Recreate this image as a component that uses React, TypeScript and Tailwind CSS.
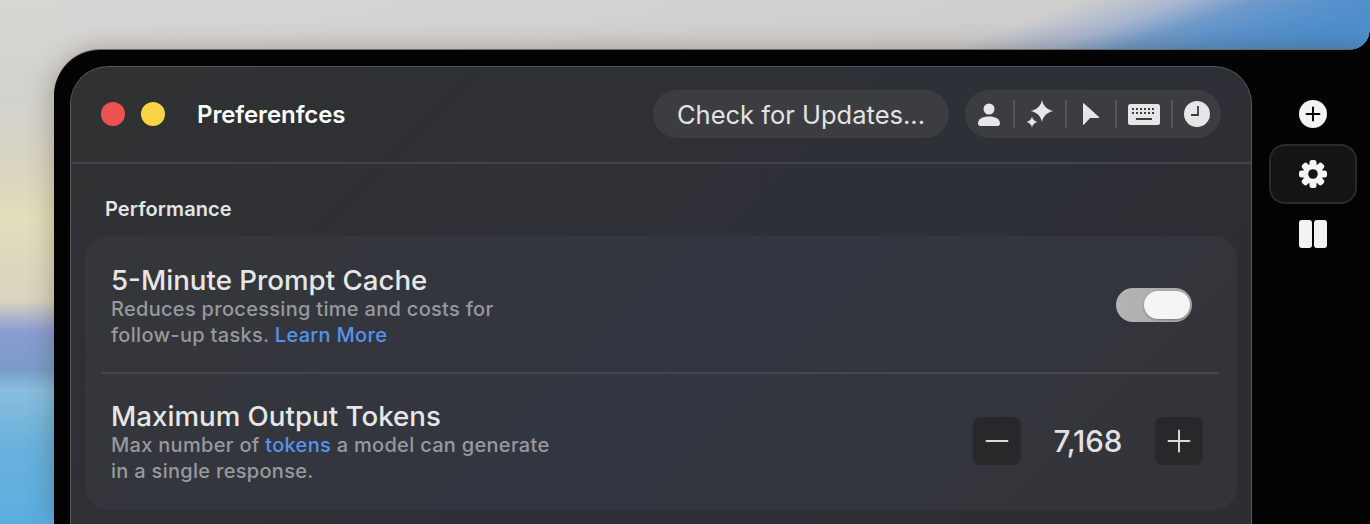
import React from 'react';
import { Minus, Plus } from 'lucide-react';

const font = { fontFamily: 'Inter, "Noto Sans", sans-serif' };
const gearTeeth = [0, 45, 90, 135, 180, 225, 270, 315];

const Divider = () => <div className="w-[2px] h-7 bg-[#55565b] shrink-0" />;

const GearIcon = () => (
  <svg width="28" height="28" viewBox="0 0 28 28" fill="#f4f4f4">
    {gearTeeth.map((deg) => (
      <rect key={deg} x="10.5" y="0" width="7" height="8" rx="2.5" transform={`rotate(${deg} 14 14)`} />
    ))}
    <circle cx="14" cy="14" r="10" />
    <circle cx="14" cy="14" r="4.8" fill="#141414" />
  </svg>
);

const Toolbar = () => (
  <div className="flex items-center h-12 w-[256px] rounded-full bg-[#3c3d41]">
    <div className="w-[48px] pr-px flex justify-center">
      <svg width="22" height="23" viewBox="0 0 22 23" fill="#e6e6e6">
        <circle cx="11" cy="6" r="5.500" />
        <path d="M0 20.500c0-4.500 4.500-7 11-7s11 2.500 11 7c0 1.500-1 2.500-2.500 2.500h-17C1 23 0 22 0 20.500z" />
      </svg>
    </div>
    <Divider />
    <div className="w-[50px] pr-px flex justify-center">
      <svg width="28" height="28" viewBox="0 0 28 28" fill="#e6e6e6">
        <path d="M16 0c1.200 6 5 9.800 11.500 11-6.500 1.200-10.300 5-11.500 11-1.200-6-5-9.800-11.500-11 6.500-1.200 10.300-5 11.500-11z" />
        <path d="M6 16.500c.6 2.800 2.500 4.900 5.500 5.500-3 .6-4.900 2.700-5.500 5.500-.6-2.800-2.500-4.900-5.500-5.500 3-.6 4.900-2.700 5.500-5.500z" />
      </svg>
    </div>
    <Divider />
    <div className="w-[48px] flex justify-center">
      <svg width="18" height="24" viewBox="0 0 18 24" fill="#e6e6e6">
        <path d="M1.500 1.500 17 15.500H8L1.500 22.500z" stroke="#e6e6e6" strokeLinejoin="round" />
      </svg>
    </div>
    <Divider />
    <div className="w-[54px] flex justify-center">
      <svg width="32" height="21" viewBox="0 0 32 21">
        <rect width="32" height="21" rx="2.500" fill="#e6e6e6" />
        <g fill="#3c3d41">
          <rect x="4" y="4" width="2" height="2" />
          <rect x="8" y="4" width="2" height="2" />
          <rect x="12" y="4" width="2" height="2" />
          <rect x="16" y="4" width="2" height="2" />
          <rect x="20" y="4" width="2" height="2" />
          <rect x="24" y="4" width="2" height="2" />
          <rect x="4" y="8" width="2" height="2" />
          <rect x="8" y="8" width="2" height="2" />
          <rect x="12" y="8" width="2" height="2" />
          <rect x="16" y="8" width="2" height="2" />
          <rect x="20" y="8" width="2" height="2" />
          <rect x="24" y="8" width="2" height="2" />
          <rect x="8" y="14" width="16" height="2" />
        </g>
      </svg>
    </div>
    <Divider />
    <div className="w-[48px] pr-px flex justify-center">
      <svg width="26" height="26" viewBox="0 0 26 26">
        <circle cx="13" cy="13" r="13" fill="#e6e6e6" />
        <path d="M14 5v9H7" fill="none" stroke="#3c3d41" strokeWidth="1.800" />
      </svg>
    </div>
  </div>
);

const Stepper = ({ children }: { children: React.ReactNode }) => (
  <button className="w-12 h-12 rounded-lg bg-[#27282a] flex items-center justify-center text-[#dcdcdc]">{children}</button>
);

export default function App() {
  return (
    <div
      style={font}
      className="relative w-[1370px] h-[524px] overflow-hidden pt-[50px] pl-[54px] flex [background:linear-gradient(180deg,#d8d7d4_0px,#d2d1cd_100px,#d9d5c0_170px,#e3debb_220px,#d8d4c0_300px,#8a9cd4_332px,#7a9cc8_370px,#88bede_390px,#68b0dc_450px,#5aaee0_524px)_0_0/54px_100%_no-repeat,linear-gradient(160deg,#d8d7d4_0px,#cfcecd_370px,#a9b6cf_405px,#6f9aca_430px,#5a92cc_455px,#4f8fcc_480px)]"
    >
      <div className="absolute top-[30px] right-0 w-5 h-5 bg-[radial-gradient(circle_at_0_0,transparent_19.5px,#000_20px)]" />
      <div className="flex-1 flex bg-[#030303] rounded-tl-[46px] pt-4 pl-4 shadow-[0_-1px_0_#6a6a68,0_0_26px_rgba(60,50,20,0.35)]">
        <main className="w-[1182px] h-[600px] shrink-0 rounded-t-[38px] border border-[#55585c] border-b-0 bg-[linear-gradient(135deg,#2f3132,#2d3037_55%,#2c2d30)]">
          <header className="h-[97px] pb-px px-[30px] border-b-2 border-[#424447] flex items-center">
            <div className="w-6 h-6 rounded-full bg-[#ee5350]" />
            <div className="w-6 h-6 rounded-full bg-[#f8d444] ml-4" />
            <h1 className="ml-8 mt-[2px] text-[24px] tracking-[-0.1px] font-semibold text-white">Preferenfces</h1>
            <div className="ml-auto flex items-center gap-4">
              <button className="h-12 w-[296px] pt-[2px] rounded-full bg-[#3c3d41] text-[25.500px] text-[#e3e3e3]">Check for Updates...</button>
              <Toolbar />
            </div>
          </header>
          <section className="px-[14px]">
            <h2 className="mt-[31px] ml-5 text-[20px] tracking-[0.1px] leading-7 font-semibold text-[#e4e4e4]">Performance</h2>
            <div className="mt-[13px] w-[1152px] rounded-3xl bg-[linear-gradient(135deg,#343638,#323641_50%,#333437)] pl-[17px] pr-[18px]">
              <div className="h-[138px] flex items-center justify-between border-b-2 border-[#45474b] pl-[9px] pr-[27px]">
                <div className="pt-[4px]">
                  <h3 className="text-[27.700px] leading-8 font-medium text-[#e6e6e6]">5-Minute Prompt Cache</h3>
                  <p className="text-[20px] tracking-[0.3px] leading-[26px] font-medium text-[#98999e] w-[440px]">
                    Reduces processing time and costs for<br />follow-up tasks. <span className="text-[#5793ec]">Learn More</span>
                  </p>
                </div>
                <div className="mt-[2px] w-[76px] h-[34px] rounded-full bg-[linear-gradient(90deg,#b4b4b4,#a8a8a8)] flex items-center justify-end pr-[2px]">
                  <div className="w-[46px] h-[28px] rounded-full bg-[#f5f5f5] shadow-[0_1px_2px_rgba(0,0,0,0.3)]" />
                </div>
              </div>
              <div className="h-[136px] pb-[2px] flex items-center justify-between pl-[9px] pr-4">
                <div className="pt-px">
                  <h3 className="text-[27.700px] leading-8 font-medium text-[#e6e6e6]">Maximum Output Tokens</h3>
                  <p className="text-[20px] tracking-[0.3px] leading-[26px] font-medium text-[#98999e] w-[460px]">
                    Max number of <span className="text-[#5793ec]">tokens</span> a model can generate<br />in a single response.
                  </p>
                </div>
                <div className="flex items-center">
                  <Stepper><Minus size={36} strokeWidth={1.300} /></Stepper>
                  <span className="w-[134px] text-center text-[29.500px] font-medium text-[#e2e2e2]">7,168</span>
                  <Stepper><Plus size={36} strokeWidth={1.300} /></Stepper>
                </div>
              </div>
            </div>
          </section>
        </main>
        <aside className="flex-1 flex flex-col items-center pt-[34px] pl-1">
          <div className="w-7 h-7 rounded-full bg-[#f2f2f2] flex items-center justify-center text-black">
            <Plus size={22} strokeWidth={2.200} />
          </div>
          <div className="mt-[16px] w-[88px] h-[60px] rounded-2xl bg-[#141414] border-2 border-[#2a2a2a] flex items-center justify-center">
            <GearIcon />
          </div>
          <div className="mt-[16px] flex gap-[2px]">
            <div className="w-[13px] h-7 rounded-[3px] bg-[#f2f2f2]" />
            <div className="w-[13px] h-7 rounded-[3px] bg-[#f2f2f2]" />
          </div>
        </aside>
      </div>
    </div>
  );
}
